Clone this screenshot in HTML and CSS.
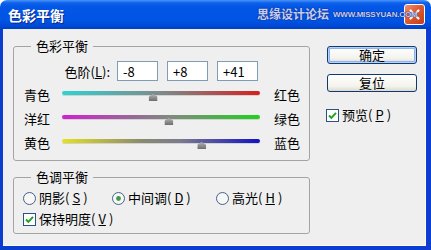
FILE: index.html
```html
<!DOCTYPE html>
<html lang="zh-CN">
<head>
  <meta charset="UTF-8" />
  <title>色彩平衡</title>
  <link rel="stylesheet" href="styles.css">
</head>
<body>
  <div class="window">
    <div class="titlebar">
      <span class="title">色彩平衡</span>
      <span class="close">
        <svg width="21" height="21" viewBox="0 0 21 21"><path d="M6.5 6.5l8 8M14.5 6.5l-8 8" stroke="#fff" stroke-width="2.2" stroke-linecap="round"/></svg>
      </span>
      <span class="watermark"><span class="wm-cn">思缘设计论坛</span><span class="wm-en">WWW.MISSYUAN.COM</span></span>
    </div>

    <div class="client">
      <div class="groups">
        <fieldset class="group balance">
          <legend>色彩平衡</legend>
          <div class="levels">
            <span class="levels-label">色阶(<u>L</u>):</span>
            <input type="text" value="-8">
            <input type="text" value="+8">
            <input type="text" value="+41">
          </div>
          <div class="slider-row">
            <span class="side left">青色</span>
            <div class="track-wrap">
              <div class="track cyan-red"></div>
              <span class="thumb" style="left: 46%"></span>
            </div>
            <span class="side">红色</span>
          </div>
          <div class="slider-row">
            <span class="side left">洋红</span>
            <div class="track-wrap">
              <div class="track magenta-green"></div>
              <span class="thumb" style="left: 54%"></span>
            </div>
            <span class="side">绿色</span>
          </div>
          <div class="slider-row">
            <span class="side left">黄色</span>
            <div class="track-wrap">
              <div class="track yellow-blue"></div>
              <span class="thumb" style="left: 70.5%"></span>
            </div>
            <span class="side">蓝色</span>
          </div>
        </fieldset>

        <fieldset class="group tone">
          <legend>色调平衡</legend>
          <div class="radio-row">
            <span class="option">
              <svg class="radio" width="13" height="13" viewBox="0 0 13 13"><circle cx="6.5" cy="6.5" r="6" fill="#f7f7f5" stroke="#44618a"/></svg>
              阴影(<u>S</u>)
            </span>
            <span class="option">
              <svg class="radio" width="13" height="13" viewBox="0 0 13 13"><circle cx="6.5" cy="6.5" r="6" fill="#f7f7f5" stroke="#44618a"/><circle cx="6.5" cy="6.5" r="2.4" fill="#3c9a48"/></svg>
              中间调(<u>D</u>)
            </span>
            <span class="option">
              <svg class="radio" width="13" height="13" viewBox="0 0 13 13"><circle cx="6.5" cy="6.5" r="6" fill="#f7f7f5" stroke="#44618a"/></svg>
              高光(<u>H</u>)
            </span>
          </div>
          <div class="check-row">
            <svg class="check" width="13" height="13" viewBox="0 0 13 13"><rect x=".5" y=".5" width="12" height="12" fill="#fff" stroke="#2a5384"/><path d="M3 6.5l2.4 2.4 4.6-5" fill="none" stroke="#21a121" stroke-width="2"/></svg>
            保持明度(<u>V</u>)
          </div>
        </fieldset>
      </div>

      <div class="actions">
        <button class="btn default">确定</button>
        <button class="btn">复位</button>
        <div class="check-row preview">
          <svg class="check" width="13" height="13" viewBox="0 0 13 13"><rect x=".5" y=".5" width="12" height="12" fill="#fff" stroke="#2a5384"/><path d="M3 6.5l2.4 2.4 4.6-5" fill="none" stroke="#21a121" stroke-width="2"/></svg>
          预览(<u>P</u>)
        </div>
      </div>
    </div>
  </div>
</body>
</html>
```

FILE: styles.css
```css
* { box-sizing: border-box; }
body {
  margin: 0;
  background: #fff;
  font-family: "Noto Sans CJK SC", "Noto Sans", sans-serif;
  font-size: 13px;
  color: #000;
}
.window {
  width: 431px;
  height: 250px;
  display: flex;
  flex-direction: column;
}
.titlebar {
  position: relative;
  height: 29px;
  display: flex;
  align-items: center;
  padding-left: 8px;
  border-radius: 7px 7px 0 0;
  background: linear-gradient(#4a94f8 0, #0c61ec 3px, #0356e6 7px, #0054e3 20px, #0049d6 26px, #003fc4 29px);
}
.title {
  color: #fff;
  font-weight: bold;
  font-size: 14px;
  text-shadow: 1px 1px 0 #0a2a8a;
}
.close {
  margin-left: auto;
  margin-right: 6px;
  width: 21px;
  height: 21px;
  border: 1px solid #fff;
  border-radius: 3px;
  background: linear-gradient(135deg, #f09070, #e05a30 45%, #c03e18);
  display: flex;
}
.close svg { margin: -1px; }
.watermark {
  position: absolute;
  z-index: 1;
  left: 257px;
  top: 6px;
  display: flex;
  align-items: center;
  gap: 4px;
  color: #c5cff2;
  text-shadow: 0 0 1px #12237a, 0 0 1px #12237a;
}
.wm-cn {
  font-size: 12px;
  font-weight: bold;
  line-height: 16px;
}
.wm-en {
  font-family: "Liberation Sans", sans-serif;
  font-size: 8px;
  font-weight: bold;
  letter-spacing: -0.2px;
}
.client {
  flex: 1;
  display: flex;
  background: #efefef;
  border: solid #0b3dd0;
  border-width: 0 5px 4px 3px;
  box-shadow: inset -1px -1px 0 #fbfbf4;
}
.groups {
  margin-left: 10px;
  width: 297px;
}
.group {
  margin: 0;
  border: 1px solid #a4a4a4;
  border-radius: 3px;
  min-width: 0;
}
.group legend {
  padding: 0 5px;
  line-height: 16px;
}
.balance {
  margin-top: 9px;
  padding: 0 0 7px 10px;
}
.balance legend { margin-left: 7px; }
.levels {
  margin-top: 7px;
  display: flex;
  align-items: center;
}
.levels-label {
  width: 86px;
  text-align: right;
  margin-right: 7px;
}
.levels input {
  width: 41px;
  height: 20px;
  margin: 0 9px 0 0;
  padding: 0 5px;
  border: 1px solid #7f9db9;
  background: #fff;
  font-family: "Noto Sans CJK SC", sans-serif;
  font-size: 13px;
}
.slider-row {
  height: 24px;
  display: flex;
}
.side {
  margin-top: 4px;
  line-height: 20px;
}
.side.left { width: 38px; }
.track-wrap {
  position: relative;
  width: 198px;
  height: 5px;
  margin: 10px 14px 0 0;
}
.track {
  height: 4px;
  border-radius: 2px;
  box-shadow: 0 1px 0 rgba(0,0,0,0.12);
}
.cyan-red { background: linear-gradient(to right, #2ed3d3, #7f8a8a 50%, #8a7878 60%, #d81e1e); }
.magenta-green { background: linear-gradient(to right, #d21fd2, #8a7a8a 45%, #808a80 55%, #1ed21e); }
.yellow-blue { background: linear-gradient(to right, #e6e21c, #8a8a70 40%, #7a7a90 60%, #1212c4); }
.thumb {
  position: absolute;
  top: 3px;
  width: 9px;
  height: 7px;
  transform: translateX(-50%);
  background: linear-gradient(#b4b4b4, #6e6e6e);
  clip-path: polygon(50% 0, 100% 40%, 100% 100%, 0 100%, 0 40%);
}
.tone {
  margin-top: 8px;
  padding: 0 0 4px 9px;
}
.tone legend { margin-left: 8px; }
.radio-row {
  margin-top: 3px;
  height: 20px;
  display: grid;
  grid-template-columns: 89px 104px auto;
  align-items: center;
}
.option, .check-row {
  display: flex;
  align-items: center;
  gap: 3px;
  line-height: 20px;
}
.check-row {
  margin-top: 1px;
  height: 20px;
}
.actions {
  margin-left: 17px;
  padding-top: 17px;
  display: flex;
  flex-direction: column;
  align-items: flex-start;
}
.btn {
  width: 90px;
  height: 18px;
  margin-bottom: 10px;
  padding: 0;
  border: 1px solid #0e3a6e;
  border-radius: 3px;
  background: linear-gradient(#ffffff, #f4f3ee 70%, #dcdad0);
  font-family: "Noto Sans CJK SC", sans-serif;
  font-size: 13px;
  line-height: 16px;
  color: #000;
}
.btn.default {
  box-shadow: inset 0 0 0 1px #b9d0f7, inset 0 0 0 2px #8db2f0;
}
.preview {
  margin-top: 3px;
  margin-left: -1px;
}
```
